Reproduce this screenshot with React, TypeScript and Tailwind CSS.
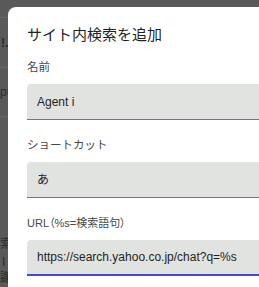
import React from "react";

const FONT = { fontFamily: '"Liberation Sans", "Noto Sans CJK JP", sans-serif' };

function Field({
  label,
  value,
  focused,
  labelSize = "text-[11.5px]",
}: {
  label: string;
  value: string;
  focused?: boolean;
  labelSize?: string;
}) {
  return (
    <div>
      <div className={`h-[18px] leading-[18px] text-[#474747] ${labelSize}`}>{label}</div>
      <div
        className={`mt-[8px] flex h-[36px] items-center rounded-tl-[4px] bg-[#e1e3e1] pl-[10px] text-[12px] text-[#1f1f1f] ${
          focused ? "border-b-2 border-[#3b4fcd]" : "border-b border-[#747775]"
        }`}
      >
        {value}
      </div>
    </div>
  );
}

export default function App() {
  return (
    <div className="relative h-[287px] w-[259px] overflow-hidden bg-[#595959]" style={FONT}>
      {/* page behind the scrim */}
      <div className="flex flex-col text-[12px] text-[#2a2a2a]">
        <div className="h-[18px] border-b border-[#666]" />
        <div className="flex h-[49px] items-center pl-[1px] font-bold">!.</div>
        <div className="h-0 border-b border-[#666]" />
        <div className="flex h-[48px] items-center">pu</div>
        <div className="h-0 border-b border-[#666]" />
        <div className="h-[120px]" />
        <div className="text-[12px] leading-[14px]">索</div>
        <div className="mt-[4px] pl-[2px] leading-[14px]">I</div>
        <div className="mt-[2px] leading-[14px]">謝</div>
      </div>

      <div className="absolute left-[8px] top-[7px] h-[300px] w-[270px] rounded-tl-[8px] bg-white pl-[19px] pt-[17px]">
        <h1 className="text-[15px] leading-[22px] text-[#1f1f1f]">サイト内検索を追加</h1>
        <div className="mt-[12px] flex flex-col gap-[16px]">
          <Field label="名前" value="Agent i" />
          <Field label="ショートカット" value="あ" />
          <Field
            label="URL（%s=検索語句）"
            value="https://search.yahoo.co.jp/chat?q=%s"
            labelSize="text-[11px] [font-feature-settings:'palt']"
            focused
          />
        </div>
      </div>
    </div>
  );
}
